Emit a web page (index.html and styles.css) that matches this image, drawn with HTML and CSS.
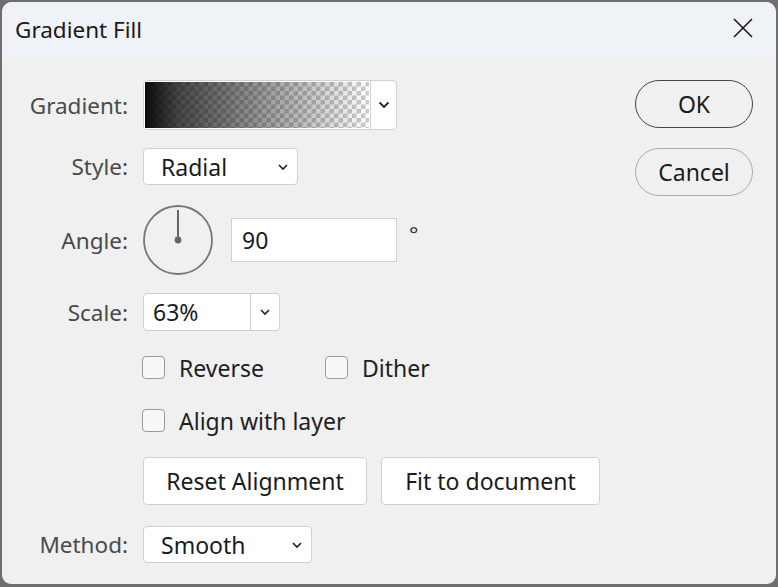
FILE: index.html
```html
<!DOCTYPE html>
<html lang="en">
<head>
<meta charset="utf-8">
<title>Gradient Fill</title>
<link rel="stylesheet" href="styles.css">
</head>
<body>
<div class="dialog">
  <div class="titlebar">
    <span class="title">Gradient Fill</span>
    <svg class="close" width="22" height="22" viewBox="0 0 22 22"><path d="M2 2 L20 20 M20 2 L2 20" stroke="#1a1a1a" stroke-width="1.6" fill="none"/></svg>
  </div>
  <div class="content">
    <div class="form">
      <div class="row row-gradient">
        <label class="lbl">Gradient:</label>
        <div class="gradpick">
          <div class="swatch"><div class="swatch-fill"></div></div>
          <div class="gradbtn"><svg width="12" height="8" viewBox="0 0 12 8"><path d="M1.5 1.5 L6 6 L10.5 1.5" stroke="#222" stroke-width="1.8" fill="none"/></svg></div>
        </div>
      </div>
      <div class="row row-style">
        <label class="lbl">Style:</label>
        <div class="select sel-style"><span>Radial</span><svg width="12" height="8" viewBox="0 0 12 8"><path d="M2 2 L6 6 L10 2" stroke="#222" stroke-width="1.6" fill="none"/></svg></div>
      </div>
      <div class="row row-angle">
        <label class="lbl">Angle:</label>
        <svg class="dial" width="70" height="70" viewBox="0 0 70 70"><circle cx="35" cy="35" r="34" stroke="#777" stroke-width="1.8" fill="none"/><line x1="35" y1="5" x2="35" y2="35" stroke="#666" stroke-width="2"/><circle cx="35" cy="35" r="3.4" fill="#666"/></svg>
        <div class="input angle-input">90</div>
        <span class="deg">°</span>
      </div>
      <div class="row row-scale">
        <label class="lbl">Scale:</label>
        <div class="combo"><span class="combo-val">63%</span><span class="combo-btn"><svg width="12" height="8" viewBox="0 0 12 8"><path d="M2 2 L6 6 L10 2" stroke="#222" stroke-width="1.6" fill="none"/></svg></span></div>
      </div>
      <div class="row row-checks">
        <span class="lbl"></span>
        <div class="check check-rev"><span class="box"></span><span>Reverse</span></div>
        <div class="check"><span class="box"></span><span>Dither</span></div>
      </div>
      <div class="row row-align">
        <span class="lbl"></span>
        <div class="check"><span class="box"></span><span>Align with layer</span></div>
      </div>
      <div class="row row-buttons">
        <span class="lbl"></span>
        <button class="btn btn-reset">Reset Alignment</button>
        <button class="btn btn-fit">Fit to document</button>
      </div>
      <div class="row row-method">
        <label class="lbl">Method:</label>
        <div class="select sel-method"><span>Smooth</span><svg width="12" height="8" viewBox="0 0 12 8"><path d="M2 2 L6 6 L10 2" stroke="#222" stroke-width="1.6" fill="none"/></svg></div>
      </div>
    </div>
    <div class="actions">
      <button class="pill pill-ok">OK</button>
      <button class="pill pill-cancel">Cancel</button>
    </div>
  </div>
</div>
</body>
</html>
```
FILE: styles.css
```css
* { box-sizing: border-box; }
html, body { margin: 0; padding: 0; }
body {
  background: #6f6f6f;
  width: 778px;
  height: 587px;
  overflow: hidden;
  font-family: "Noto Sans", "Open Sans", sans-serif;
  color: #1b1b1b;
}
.dialog {
  margin: 2px 0 0 2px;
  width: 774px;
  height: 582px;
  background: #f0f0f0;
  border-radius: 10px 10px 9px 9px;
  overflow: hidden;
}
.titlebar {
  height: 56px;
  background: #eff3f8;
  display: flex;
  align-items: center;
  justify-content: space-between;
  padding: 0 22px 0 13px;
}
.title {
  font-size: 22.5px;
  color: #1a1a1a;
  margin-top: -2px;
}
.close { margin-top: -4px; }
.content {
  display: flex;
  padding-top: 22px;
}
.form {
  width: 620px;
  display: flex;
  flex-direction: column;
}
.row {
  display: flex;
  align-items: center;
}
.lbl {
  width: 126px;
  flex: none;
  text-align: right;
  font-size: 22.5px;
  color: #4a4a4a;
  margin-right: 15px;
}
.gradpick {
  display: flex;
  width: 254px;
  height: 50px;
  border: 1px solid #d0d0d0;
  border-radius: 4px;
  background: #fff;
  overflow: hidden;
}
.swatch {
  width: 226px;
  height: 100%;
  border: 1px solid #fff;
  background-color: #fff;
  background-image:
    linear-gradient(45deg, #c8c8c8 25%, transparent 25%, transparent 75%, #c8c8c8 75%),
    linear-gradient(45deg, #c8c8c8 25%, transparent 25%, transparent 75%, #c8c8c8 75%);
  background-size: 9px 9px;
  background-position: 0 0, 4.5px 4.5px;
}
.swatch-fill {
  width: 100%;
  height: 100%;
  background: linear-gradient(to right, rgba(10,10,10,1) 0%, rgba(10,10,10,0.75) 15%, rgba(10,10,10,0) 100%);
}
.gradbtn {
  flex: 1;
  border-left: 1px solid #d0d0d0;
  display: flex;
  align-items: center;
  justify-content: center;
}
.select {
  height: 37px;
  border: 1px solid #d0d0d0;
  border-radius: 4px;
  background: #fff;
  display: flex;
  align-items: center;
  justify-content: space-between;
  padding: 0 8px 0 17px;
  font-size: 23px;
}
.row-style { margin-top: 18px; }
.sel-style { width: 155px; }
.row-angle { margin-top: 20px; }
.dial { display: block; }
.input {
  height: 44px;
  border: 1px solid #d0d0d0;
  background: #fff;
  font-size: 23px;
  display: flex;
  align-items: center;
  padding-left: 10px;
}
.angle-input { width: 166px; margin-left: 18px; }
.deg { font-size: 22px; margin-left: 12px; margin-top: -14px; color: #333; }
.row-scale { margin-top: 18px; }
.combo {
  display: flex;
  width: 137px;
  height: 38px;
  border: 1px solid #d0d0d0;
  border-radius: 4px;
  background: #fff;
  font-size: 23px;
}
.combo-val { width: 107px; border-right: 1px solid #d0d0d0; display: flex; align-items: center; padding-left: 9px; }
.combo-btn { flex: 1; display: flex; align-items: center; justify-content: center; }
.row-checks { margin-top: 25px; }
.row-align { margin-top: 30px; }
.check {
  display: flex;
  align-items: center;
  font-size: 23px;
  color: #1f1f1f;
  height: 23px;
}
.box {
  width: 23px;
  height: 23px;
  border: 1.5px solid #9a9a9a;
  border-radius: 4px;
  background: #f8f8f8;
  margin-right: 14px;
  margin-left: -1px;
}
.check-rev { width: 183px; }
.row-buttons { margin-top: 25px; }
.btn {
  height: 48px;
  border: 1px solid #d0d0d0;
  border-radius: 4px;
  background: #fff;
  font-family: inherit;
  font-size: 23px;
  color: #1b1b1b;
  padding: 0;
}
.btn-reset { width: 224px; }
.btn-fit { width: 219px; margin-left: 14px; }
.row-method { margin-top: 21px; }
.sel-method { width: 169px; }
.actions {
  display: flex;
  flex-direction: column;
  gap: 20px;
  margin-left: 13px;
}
.pill {
  width: 118px;
  height: 48px;
  border-radius: 24px;
  background: #f0f0f0;
  font-family: inherit;
  font-size: 23px;
  color: #1b1b1b;
  padding: 0;
}
.pill-ok { border: 1.5px solid #454545; }
.pill-cancel { border: 1.5px solid #aaaaaa; }
```
